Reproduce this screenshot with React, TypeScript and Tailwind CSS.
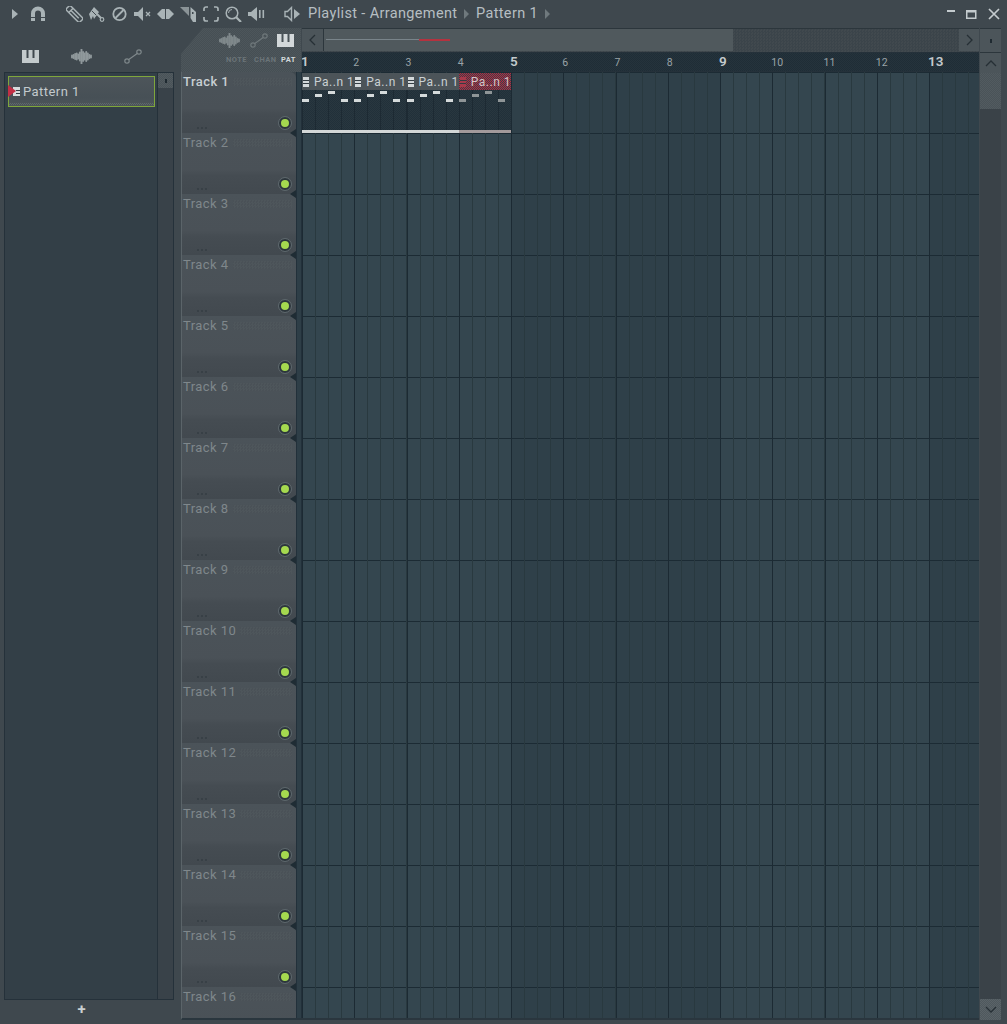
import type { ReactNode } from 'react'

const ICON = '#a9b3b6'

function Icon({ w, h = 16, className = '', children }: { w: number; h?: number; className?: string; children: ReactNode }) {
  return (
    <svg width={w} height={h} viewBox={`0 0 ${w} ${h}`} className={`shrink-0 ${className}`}>
      {children}
    </svg>
  )
}

function PianoIcon({ color }: { color: string }) {
  return (
    <Icon w={17} h={13}>
      <path d="M0 0h4.500v8h2V0h4v8h2V0H17v13H0z" fill={color} />
    </Icon>
  )
}

function WaveIcon({ color }: { color: string }) {
  const bars = [1, 1.500, 2.500, 3, 2, 4, 7, 4.500, 3, 4.500, 3, 1.500, 1]
  return (
    <Icon w={21} h={15}>
      {bars.map((b, i) => (
        <line key={i} x1={1 + i * 1.580} x2={1 + i * 1.580} y1={7.500 - b} y2={7.500 + b} stroke={color} strokeWidth={1.900} strokeLinecap="round" />
      ))}
    </Icon>
  )
}

function AutomationIcon({ color }: { color: string }) {
  return (
    <Icon w={18} h={15}>
      <circle cx={3} cy={12} r={2.200} fill="none" stroke={color} strokeWidth={1.200} />
      <circle cx={15} cy={3} r={2.200} fill="none" stroke={color} strokeWidth={1.200} />
      <line x1={4.800} y1={10.600} x2={13.200} y2={4.400} stroke={color} strokeWidth={1.200} />
    </Icon>
  )
}

function Toolbar() {
  return (
    <div className="flex items-center h-[28px] pl-[12px] pr-[7px] shrink-0">
      <Icon w={6} h={10}><polygon points="0,0 6,5 0,10" fill={ICON} /></Icon>
      <Icon w={16} className="ml-[12px]">
        <path d="M1 15V7.500a7 7 0 0 1 14 0V15h-4V7.500a3 3 0 0 0-6 0V15z" fill={ICON} />
        <rect x={1} y={11} width={4} height={1} fill="#3f484e" />
        <rect x={11} y={11} width={4} height={1} fill="#3f484e" />
      </Icon>
      <Icon w={17} className="ml-[20px]">
        <g transform="rotate(-45 8.500 8)" fill="none" stroke={ICON} strokeWidth={1.500}>
          <rect x={5.500} y={-1.500} width={6} height={19} rx={1.500} />
          <line x1={5.500} y1={3} x2={11.500} y2={3} />
          <line x1={8.500} y1={3} x2={8.500} y2={14} />
        </g>
      </Icon>
      <Icon w={17} className="ml-[5px]">
        <polygon points="1,8 6,1 11,6 6,13 5,10 3,14 2,11" fill={ICON} />
        <path d="M4 5l4 4" stroke="#3f484e" strokeWidth={1} />
        <line x1={9} y1={8} x2={13} y2={12} stroke={ICON} strokeWidth={2} />
        <circle cx={14} cy={13.500} r={1.800} fill="none" stroke={ICON} strokeWidth={1.200} />
      </Icon>
      <Icon w={15} className="ml-[7px]">
        <circle cx={7.500} cy={8} r={6.200} fill="none" stroke={ICON} strokeWidth={1.800} />
        <line x1={3.500} y1={12} x2={11.500} y2={4} stroke={ICON} strokeWidth={1.800} />
      </Icon>
      <Icon w={17} className="ml-[7px]">
        <polygon points="0,6 4,6 9,1 9,15 4,10 0,10" fill={ICON} />
        <path d="M12 6l4 4M16 6l-4 4" stroke={ICON} strokeWidth={1.300} />
      </Icon>
      <Icon w={17} className="ml-[6px]">
        <polygon points="0,8 5,3 8,3 8,13 5,13" fill={ICON} />
        <polygon points="17,8 12,3 9,3 9,13 12,13" fill={ICON} />
      </Icon>
      <Icon w={17} className="ml-[6px]">
        <polygon points="0,1 9,1 9,10" fill="#8b9497" />
        <path d="M10.500 1 L16 6 V16 H13 L10.500 12 Z" fill={ICON} />
        <rect x={12} y={6} width={1.500} height={2} fill="#3f484e" />
      </Icon>
      <Icon w={16} className="ml-[6px]">
        <path d="M1 5V3a2 2 0 0 1 2-2h2M11 1h2a2 2 0 0 1 2 2v2M15 11v2a2 2 0 0 1-2 2h-2M5 15H3a2 2 0 0 1-2-2v-2" fill="none" stroke={ICON} strokeWidth={1.700} />
      </Icon>
      <Icon w={17} className="ml-[6px]">
        <circle cx={7} cy={7} r={5.800} fill="none" stroke={ICON} strokeWidth={1.500} />
        <path d="M3.500 7a3.500 3.500 0 0 1 3.500-3.500" fill="none" stroke={ICON} strokeWidth={1} />
        <line x1={11} y1={11} x2={16} y2={16} stroke={ICON} strokeWidth={2.200} />
      </Icon>
      <Icon w={17} className="ml-[6px]">
        <polygon points="0,6 3,6 9,1 9,15 3,10 0,10" fill={ICON} />
        <rect x={11} y={4} width={1.600} height={8} fill={ICON} />
        <rect x={14.500} y={4} width={1.600} height={8} fill={ICON} />
      </Icon>
      <Icon w={16} className="ml-[19px]">
        <path d="M7.500 1.500V14.500L3.500 10.500H1V5.500H3.500Z" fill="none" stroke={ICON} strokeWidth={1.400} />
        <polygon points="10,3 16,8 10,13" fill={ICON} />
      </Icon>
      <span className="ml-[8px] w-[149px] text-[14.500px] tracking-[0.35px] text-[#b6bec2] whitespace-nowrap">Playlist - Arrangement</span>
      <span className="ml-[7px] w-0 h-0 border-y-[5px] border-y-transparent border-l-[5px] border-l-[#6f797d]" />
      <span className="ml-[7px] w-[61px] text-[14.500px] tracking-[0.35px] text-[#b6bec2] whitespace-nowrap">Pattern 1</span>
      <span className="ml-[8px] w-0 h-0 border-y-[5px] border-y-transparent border-l-[5px] border-l-[#6f797d]" />
      <div className="ml-auto flex items-center">
        <Icon w={9} h={12}><rect x={0} y={2} width={8} height={2} fill="#c4cbce" /></Icon>
        <Icon w={11} h={12} className="ml-[10px]">
          <rect x={0.750} y={2.750} width={9} height={7.500} fill="none" stroke="#c4cbce" strokeWidth={1.500} />
          <rect x={0} y={2} width={10} height={2.500} fill="#c4cbce" />
        </Icon>
        <Icon w={12} h={12} className="ml-[11px]">
          <path d="M1 1l10 10M11 1L1 11" stroke="#c4cbce" strokeWidth={1.700} />
        </Icon>
      </div>
    </div>
  )
}

function PatternPicker() {
  return (
    <div className="w-[181px] shrink-0 flex flex-col">
      <div className="h-[44px] flex items-center pt-[12px]">
        <div className="ml-[22px]"><PianoIcon color="#c3cacc" /></div>
        <div className="ml-[32px]"><WaveIcon color="#8f989b" /></div>
        <div className="ml-[32px]"><AutomationIcon color="#7f888b" /></div>
      </div>
      <div className="ml-[4px] w-[170px] h-[928px] flex border border-[#25313a] bg-[#333f47]">
        <div className="flex-1 border-r border-[#25313a] pl-[3px] pt-[3px]">
          <div className="relative h-[31px] w-[147px] flex items-center border border-[#7fa63c] bg-[linear-gradient(180deg,#4d555a_0%,#475056_70%,#4c5459_100%)]">
            <span className="absolute left-[-1px] top-[8px] z-10 w-0 h-0 border-y-[6px] border-y-transparent border-l-[8px] border-l-[#c22f45]" />
            <span className="absolute left-0 right-0 bottom-[1px] h-[2px] bg-[repeating-conic-gradient(#5f686c_0_25%,#4a5257_0_50%)] bg-[length:2px_2px]" />
            <span className="ml-[4px] w-[7px] h-[9px] flex flex-col justify-center items-end gap-[2px] bg-[#d6dbdc]">
              <span className="w-[4px] h-[1px] bg-[#333c42]" />
              <span className="w-[4px] h-[1px] bg-[#333c42]" />
            </span>
            <span className="ml-[3px] text-[13px] tracking-[0.45px] text-[#c3cacd] leading-none">Pattern 1</span>
          </div>
        </div>
        <div className="w-[15px] bg-[#394249]">
          <div className="h-[15px] flex items-center justify-center bg-[repeating-conic-gradient(#525b60_0_25%,#495257_0_50%)] bg-[length:2px_2px]">
            <span className="w-[2px] h-[4px] bg-[#1f2a31]" />
          </div>
        </div>
      </div>
      <div className="h-[18px] flex items-center justify-center pr-[18px]">
        <span className="text-[15px] leading-none font-bold text-[#c9cfd1]">+</span>
      </div>
    </div>
  )
}

function TrackRow({ index }: { index: number }) {
  const active = index === 0
  return (
    <div className="relative h-[61px] shrink-0 flex">
      <div className="w-[115px] rounded-r-[6px] flex flex-col pl-[1px] bg-[linear-gradient(180deg,#4b5359_0%,#4a5157_60%,#454c52_70%,#42494f_100%)]">
        <div className="mt-[1px] h-[17px] flex items-center pr-[4px]">
          <span
            className={`leading-[17px] text-[13px] tracking-[0.45px] ${
              active ? 'text-[#c8cfd2] font-medium' : 'text-[#7f878b]'
            }`}
          >
            Track {index + 1}
          </span>
          <span className="ml-[4px] flex-1 h-[8px] bg-[repeating-conic-gradient(#4e565b_0_25%,#4a5157_0_50%)] bg-[length:3px_3px]" />
        </div>
        <div className="mt-auto flex items-start justify-between pr-[5px] pb-[4px]">
          <div className="ml-[14px] mt-[10px] flex gap-[2px]">
            <span className="w-[2px] h-[2px] bg-[#384046]" />
            <span className="w-[2px] h-[2px] bg-[#384046]" />
            <span className="w-[2px] h-[2px] bg-[#384046]" />
          </div>
          <span className="w-[12px] h-[12px] rounded-full bg-[#a5d94f] border-2 border-[#2c363c] outline outline-[#5d676c]" />
        </div>
      </div>
      <span className="absolute right-[6px] bottom-[-4px] w-0 h-0 border-y-[4px] border-y-transparent border-r-[6px] border-r-[#1f2c34] z-10" />
      <div className="w-[6px] border-x border-[#22303a] bg-[#2e3e47]" />
    </div>
  )
}

function PatternClip({ selected }: { selected: boolean }) {
  const noteOffsets = ['mt-[9px]', 'mt-[4px]', 'mt-[1px]', 'mt-[9px]']
  return (
    <div className="w-[52.250px] h-[60px] mt-[1px] shrink-0 flex flex-col bg-[repeating-linear-gradient(90deg,#1d2a33_0_1px,transparent_1px_13.062px),repeating-conic-gradient(#21303a_0_25%,#29373f_0_50%)] bg-[length:auto,2px_2px]">
      <div
        className={`h-[17px] flex items-center pl-[1px] ${
          selected
            ? 'bg-[repeating-conic-gradient(#b32a40_0_25%,#3d4049_0_50%)] bg-[length:2px_2px]'
            : 'bg-[#4c5459]'
        }`}
      >
        <span className={`w-[9px] h-[10px] flex flex-col justify-center gap-[2px] items-end ${selected ? 'bg-[#a73a4b]' : 'bg-[#d3d8da]'}`}>
          <span className="w-[6px] h-[1px] bg-[#333c42]" />
          <span className="w-[6px] h-[1px] bg-[#333c42]" />
        </span>
        <span className={`ml-[5px] text-[12px] tracking-[0.5px] whitespace-nowrap ${selected ? 'text-[#d3c4c8]' : 'text-[#c9d0d3]'}`}>Pa..n 1</span>
      </div>
      <div className="flex">
        {noteOffsets.map((offset, i) => (
          <div key={i} className="w-[13.062px] shrink-0">
            <div className={`w-[7px] h-[3px] ${offset} ${selected ? 'bg-[#8f9597]' : 'bg-[#d5dadb]'}`} />
          </div>
        ))}
      </div>
      <div className={`mt-auto h-[3px] ${selected ? 'bg-[#a39a9b]' : 'bg-[#d3d7d7]'}`} />
    </div>
  )
}

function Ruler() {
  const bars = Array.from({ length: 13 }, (_, i) => i + 1)
  return (
    <div className="h-[20px] flex items-center overflow-hidden border-y border-[#25313a] bg-[repeating-conic-gradient(#1f2d36_0_25%,#25333c_0_50%)] bg-[length:2px_2px]">
      {bars.map((n) => (
        <div key={n} className="w-[52.250px] shrink-0 leading-none pb-[2px] first:-ml-[1px]">
          <span className={n % 4 === 1 ? 'text-[13.500px] font-semibold text-[#c3cacd]' : 'text-[10.500px] text-[#9aa3a7]'}>{n}</span>
        </div>
      ))}
    </div>
  )
}

function HorizontalScroll() {
  return (
    <div className="h-[24px] flex border-t border-[#2c363c] pb-[1px] bg-[repeating-conic-gradient(#3b444a_0_25%,#41494e_0_50%)] bg-[length:3px_3px]">
      <div className="w-[21px] flex items-center justify-center bg-[#4c555a]">
        <Icon w={7} h={12}><path d="M6 1L1 6l5 5" fill="none" stroke="#262f35" strokeWidth={1.300} /></Icon>
      </div>
      <div className="w-[410px] flex items-center pl-[2px] pb-[1px] border-l border-[#2c363c] bg-[#50595d]">
        <span className="w-[93px] h-[1px] bg-[#79848a]" />
        <span className="w-[31px] h-[2px] bg-[#b5323f]" />
      </div>
      <div className="flex-1" />
      <div className="w-[20px] flex items-center justify-center bg-[#4c555a]">
        <Icon w={7} h={12}><path d="M1 1l5 5-5 5" fill="none" stroke="#262f35" strokeWidth={1.300} /></Icon>
      </div>
    </div>
  )
}

function VerticalScroll() {
  return (
    <div className="w-[21px] ml-[1px] shrink-0 flex flex-col">
      <div className="h-[24px] flex items-center justify-center border-t border-[#2c363c] bg-[#4c555a]">
        <span className="w-[2px] h-[4px] bg-[#1f2a31]" />
      </div>
      <div className="h-[21px] flex items-center justify-center border-t border-[#2c363c] bg-[#4c555a]">
        <Icon w={12} h={7}><path d="M1 6l5-5 5 5" fill="none" stroke="#262f35" strokeWidth={1.300} /></Icon>
      </div>
      <div className="h-[36px] bg-[repeating-conic-gradient(#525b60_0_25%,#4a5358_0_50%)] bg-[length:2px_2px]" />
      <div className="flex-1 bg-[#3a4248]" />
      <div className="h-[21px] flex items-center justify-center bg-[repeating-conic-gradient(#5a6368_0_25%,#4f585d_0_50%)] bg-[length:2px_2px]">
        <Icon w={12} h={7}><path d="M1 1l5 5 5-5" fill="none" stroke="#262f35" strokeWidth={1.300} /></Icon>
      </div>
    </div>
  )
}

export default function App() {
  const tracks = Array.from({ length: 16 }, (_, i) => i)

  return (
    <div className="w-[1007px] h-[1024px] overflow-hidden flex flex-col bg-[#3f484e] font-['Roboto',sans-serif]">
      <Toolbar />
      <div className="flex h-[996px] pb-[4px]">
        <PatternPicker />

        {/* Track header column */}
        <div className="w-[121px] shrink-0 flex flex-col">
          <div className="h-[44px] w-[120px] shrink-0 flex flex-col [clip-path:polygon(22px_0,100%_0,100%_100%,0_100%,0_26px)] bg-[repeating-conic-gradient(#4d565b_0_25%,#464f54_0_50%)] bg-[length:2px_2px]">
            <div className="flex items-center pt-[5px] pl-[38px]">
              <WaveIcon color="#7f888b" />
              <div className="ml-[10px]"><AutomationIcon color="#6f787b" /></div>
              <div className="ml-[9px]"><PianoIcon color="#d3d8da" /></div>
            </div>
            <div className="flex items-center mt-[8px] pl-[45px] text-[7.500px] font-bold tracking-[0.5px] leading-none">
              <span className="w-[28px] text-[#6b7478]">NOTE</span>
              <span className="w-[27px] text-[#6b7478]">CHAN</span>
              <span className="text-[#d3d8da]">PAT</span>
            </div>
          </div>
          <div className="flex-1 overflow-hidden flex flex-col border-l border-[#5b6469] border-b-2 border-b-[#2a363e]">
            {tracks.map((i) => (
              <TrackRow key={i} index={i} />
            ))}
          </div>
        </div>

        {/* Timeline */}
        <div className="w-[677px] shrink-0 flex flex-col">
          <HorizontalScroll />
          <Ruler />
          <div className="flex-1 flex items-start overflow-hidden border-b-2 border-b-[#2a363e] bg-[repeating-linear-gradient(90deg,#1c2a33_0_1px,transparent_1px_52.250px),repeating-linear-gradient(90deg,#29393f_0_1px,transparent_1px_13.062px),repeating-linear-gradient(180deg,#1c2b34_0_1px,transparent_1px_61px),repeating-linear-gradient(90deg,#34464f_0_209px,#2f4049_209px_418px)]">
            <PatternClip selected={false} />
            <PatternClip selected={false} />
            <PatternClip selected={false} />
            <PatternClip selected={true} />
          </div>
        </div>

        <VerticalScroll />
      </div>
    </div>
  )
}
